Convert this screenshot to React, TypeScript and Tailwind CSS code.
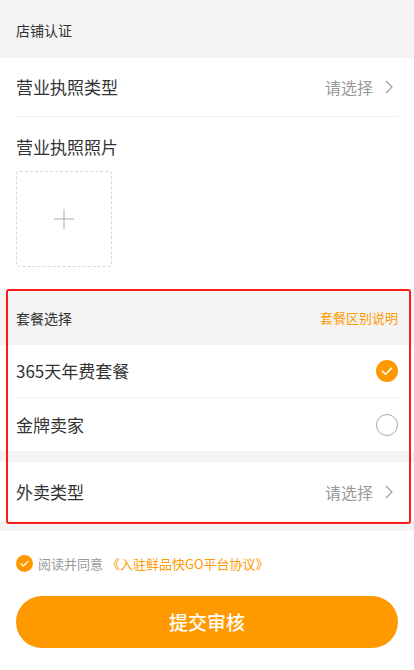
const font = { fontFamily: '"Noto Sans CJK SC", "Noto Sans", sans-serif' };

const Chevron = () => (
  <svg width="8" height="14" viewBox="0 0 8 14" fill="none" className="ml-3 mr-[5px]">
    <polyline points="1,1 7,7 1,13" stroke="#999" strokeWidth="1.1" />
  </svg>
);

const Checked = ({ size = 22 }: { size?: number }) => (
  <svg width={size} height={size} viewBox="0 0 22 22">
    <circle cx="11" cy="11" r="11" fill="#ff9900" />
    <polyline points="6.5,11.2 9.6,14.2 15.5,8.3" fill="none" stroke="#fff" strokeWidth="1.6" strokeLinecap="round" strokeLinejoin="round" />
  </svg>
);

const Unchecked = () => (
  <div className="w-[22px] h-[22px] rounded-full border border-[#aaa]" />
);

export default function App() {
  return (
    <div className="w-[414px] min-h-[670px] bg-white text-[#333]" style={font}>
      {/* 店铺认证 */}
      <div className="h-[58px] bg-[#f4f4f4] px-4 flex items-center pt-[3px] text-[14px]">店铺认证</div>

      <div className="mx-4 h-[59px] border-b border-[#f0f0f0] flex items-center justify-between">
        <span className="text-[17px]">营业执照类型</span>
        <span className="flex items-center text-[16px] text-[#999]">
          请选择
          <Chevron />
        </span>
      </div>

      <div className="px-4 pt-[18px] pb-[22px]">
        <div className="text-[17px] leading-6">营业执照照片</div>
        <div className="mt-3 w-24 h-24 border border-dashed border-[#d8d8d8] rounded flex items-center justify-center">
          <svg width="20" height="20" viewBox="0 0 20 20">
            <line x1="10" y1="0" x2="10" y2="20" stroke="#bbb" strokeWidth="1.2" />
            <line x1="0" y1="10" x2="20" y2="10" stroke="#bbb" strokeWidth="1.2" />
          </svg>
        </div>
      </div>

      {/* 套餐 */}
      <div className="relative">
        <div className="h-[56px] bg-[#f4f4f4] px-4 flex items-center justify-between pt-[2px]">
          <span className="text-[14px]">套餐选择</span>
          <span className="text-[13px] text-[#ff9900]">套餐区别说明</span>
        </div>
        <div className="mx-4 h-[53px] border-b border-[#f0f0f0] flex items-center justify-between">
          <span className="text-[17px]">365天年费套餐</span>
          <Checked />
        </div>
        <div className="mx-4 h-[53px] flex items-center justify-between">
          <span className="text-[17px]">金牌卖家</span>
          <Unchecked />
        </div>
        <div className="h-[11px] bg-[#f4f4f4]" />
        <div className="mx-4 h-[59px] flex items-center justify-between">
          <span className="text-[17px]">外卖类型</span>
          <span className="flex items-center text-[16px] text-[#999]">
            请选择
            <Chevron />
          </span>
        </div>
        <div className="absolute left-[6px] right-[3px] top-0 bottom-[-3px] border-[2px] border-[#ff1a1a] rounded-[3px] pointer-events-none" />
      </div>
      <div className="h-[10px] bg-[#f4f4f4]" />

      {/* 协议 */}
      <div className="px-4 pt-[24px] flex items-center text-[13px] leading-4">
        <Checked size={17} />
        <span className="ml-[5px] text-[#999]">阅读并同意</span>
        <span className="ml-[4px] text-[#ff9900]">《入驻鲜品快GO平台协议》</span>
      </div>

      <div className="px-4 pt-6">
        <button className="w-full h-[52px] rounded-full bg-[#ff9900] text-white text-[19px] font-medium">提交审核</button>
      </div>
    </div>
  );
}
